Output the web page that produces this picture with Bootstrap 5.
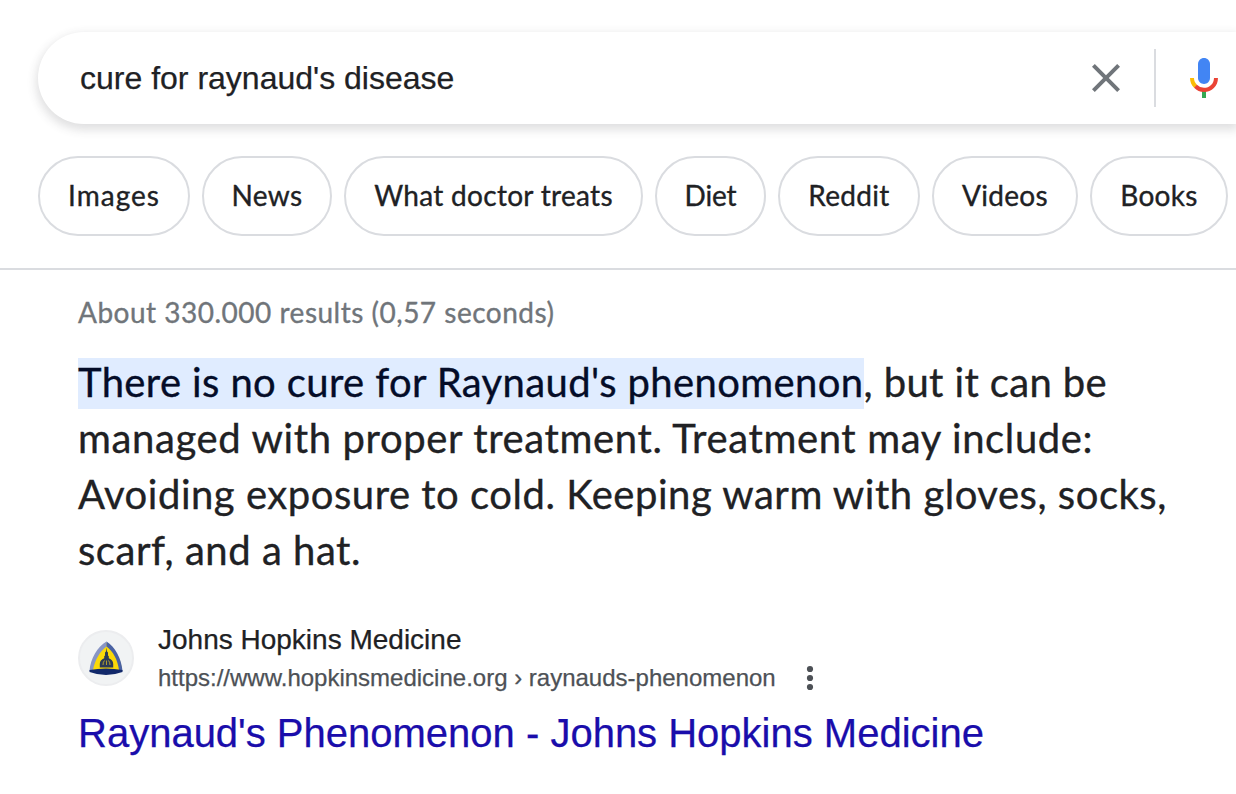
<!DOCTYPE html>
<html lang="en">
<head>
    <meta charset="UTF-8">
    <meta name="viewport" content="width=device-width, initial-scale=1.0">
    <title>cure for raynaud's disease - Search</title>
    <link href="https://cdn.jsdelivr.net/npm/bootstrap@5.3.0/dist/css/bootstrap.min.css" rel="stylesheet">
    <style>
        :root {
            --text-color: #202124;
            --muted-color: #70757a;
            --line-color: #dadce0;
            --link-color: #1a0dab;
        }

        body {
            background-color: #fff;
            color: var(--text-color);
            font-family: "Liberation Sans", Arial, sans-serif;
            height: 794px;
            -webkit-text-stroke: 0.25px;
        }

        .ui-font {
            font-family: Lato, "Open Sans", sans-serif;
            -webkit-text-stroke: 0.35px;
        }

        .search-wrap {
            padding: 32px 0 32px 38px;
        }

        .search-box {
            height: 92px;
            padding-left: 42px;
            box-shadow: 0 4px 10px 2px rgba(64, 60, 67, 0.16);
        }

        .search-text {
            width: 1002px;
            font-size: 32px;
            line-height: 40px;
        }

        .search-divider {
            width: 2px;
            height: 58px;
            margin: 0 24px;
            background-color: var(--line-color);
        }

        .filters {
            gap: 12px;
            padding: 0 0 32px 38px;
            border-bottom: 2px solid var(--line-color);
        }

        .filter-pill {
            height: 80px;
            padding: 0 0 3px;
            border: 2px solid var(--line-color);
            color: var(--text-color);
            font-size: 28px;
            letter-spacing: 0.3px;
            white-space: nowrap;
        }

        .w-images { width: 152px; letter-spacing: 1px; }
        .w-news { width: 130px; }
        .w-doctor { width: 299px; }
        .w-diet { width: 111px; letter-spacing: -0.1px; }
        .w-reddit { width: 142px; }
        .w-videos { width: 146px; }
        .w-books { width: 138px; }

        .results {
            padding: 28px 0 0 78px;
        }

        .stats {
            margin-bottom: 28px;
            color: var(--muted-color);
            font-size: 28px;
            line-height: 28px;
            letter-spacing: 0.5px;
        }

        .answer {
            margin-bottom: 42px;
            font-size: 40px;
            line-height: 56px;
            letter-spacing: 0.53px;
            white-space: nowrap;
        }

        .answer-first {
            letter-spacing: 0.38px;
        }

        .answer-second {
            letter-spacing: 0.63px;
        }

        .highlighted {
            padding-bottom: 3px;
            background-color: #e0ecff;
            color: #040c28;
        }

        .site-icon {
            width: 56px;
            height: 56px;
            margin: 10px 24px 0 0;
            background-color: #f1f3f4;
            border: 2px solid #ecedef;
        }

        .site-name {
            padding-top: 2px;
            font-size: 28px;
            line-height: 36px;
        }

        .site-url {
            color: #4d5156;
            font-size: 24px;
            line-height: 40px;
        }

        .more-icon {
            margin-left: 28px;
        }

        .result-title {
            margin-top: 9px;
            font-size: 40px;
            line-height: 52px;
            font-weight: 400;
        }

        .result-title a {
            color: var(--link-color);
        }
    </style>
</head>
<body class="overflow-hidden">
    <header>
        <div class="search-wrap">
            <div class="search-box d-flex align-items-center rounded-start-pill bg-white">
                <div class="search-text flex-shrink-0">cure for raynaud's disease</div>
                <svg class="flex-shrink-0" width="48" height="48" viewBox="0 0 24 24" fill="#70757a">
                    <path d="M19 6.41L17.59 5 12 10.59 6.41 5 5 6.41 10.59 12 5 17.59 6.41 19 12 13.41 17.59 19 19 17.59 13.41 12z"/>
                </svg>
                <div class="search-divider flex-shrink-0"></div>
                <svg class="flex-shrink-0" width="48" height="48" viewBox="0 0 24 24">
                    <path fill="#4285f4" d="m12 15c1.66 0 3-1.31 3-2.97v-7.02c0-1.66-1.34-3.01-3-3.01s-3 1.34-3 3.01v7.02c0 1.66 1.34 2.97 3 2.97z"/>
                    <path fill="#34a853" d="m11 18.08h2v3.92h-2z"/>
                    <path fill="#fbbc04" d="m7.05 16.87c-1.27-1.33-2.05-2.83-2.05-4.87h2c0 1.45 0.56 2.42 1.47 3.38v0.32l-1.15 1.18z"/>
                    <path fill="#ea4335" d="m12 16.93a4.97 5.25 0 0 1-3.54-1.55l-1.41 1.49c1.26 1.34 3.02 2.13 4.95 2.13 3.87 0 6.99-2.92 6.99-7h-1.99c0 2.92-2.24 4.93-5 4.93z"/>
                </svg>
            </div>
        </div>

        <nav class="filters ui-font d-flex">
            <a href="#" class="filter-pill w-images btn rounded-pill d-flex align-items-center justify-content-center">Images</a>
            <a href="#" class="filter-pill w-news btn rounded-pill d-flex align-items-center justify-content-center">News</a>
            <a href="#" class="filter-pill w-doctor btn rounded-pill d-flex align-items-center justify-content-center">What doctor treats</a>
            <a href="#" class="filter-pill w-diet btn rounded-pill d-flex align-items-center justify-content-center">Diet</a>
            <a href="#" class="filter-pill w-reddit btn rounded-pill d-flex align-items-center justify-content-center">Reddit</a>
            <a href="#" class="filter-pill w-videos btn rounded-pill d-flex align-items-center justify-content-center">Videos</a>
            <a href="#" class="filter-pill w-books btn rounded-pill d-flex align-items-center justify-content-center">Books</a>
        </nav>
    </header>

    <main class="results">
        <div class="stats ui-font">About 330.000 results (0,57 seconds)</div>

        <div class="answer ui-font">
            <span class="answer-first"><span class="highlighted">There is no cure for Raynaud's phenomenon</span>, but it can be</span><br>
            <span class="answer-second">managed with proper treatment. Treatment may include:</span><br>
            Avoiding exposure to cold. Keeping warm with gloves, socks,<br>
            scarf, and a hat.
        </div>

        <div class="d-flex align-items-start">
            <div class="site-icon rounded-circle d-flex align-items-center justify-content-center">
                <!-- Shield with dome -->
                <svg width="36" height="36" viewBox="0 0 36 36">
                    <path fill="#fbd908" d="M18.500 3C12 8 3.500 18 2 31q16 5 32 0C33 18 26 8 18.500 3z"/>
                    <path fill="#8895c4" d="M18.500 1.500C9.500 7 2.500 18 1.500 31l3.500-1C7 20 12 11 18.500 6.500z"/>
                    <path fill="#4a62a3" d="M18.500 1.500C27 7 33.500 18 34.500 31l-3.500-1C29.700 20 25 11 18.500 6.500z"/>
                    <path fill="#12296b" d="M1.500 30q16.500-3 33 0v2q-16.500 6-33 0z"/>
                    <path fill="#2c3a55" d="M18.500 7.500l.5 4 1 1v3l.8.800v2c2.800 1 4.400 3 4.400 5.700v3.500H11.800V24c0-2.700 1.600-4.700 4.400-5.700v-2l.8-.8v-3l1-1z"/>
                    <path fill="none" stroke="#e9c91f" stroke-width=".7" d="M15 25q0-3 1.500-4.500M18.500 25V20.500M22 25q0-3-1.500-4.500"/>
                </svg>
            </div>
            <div>
                <div class="site-name">Johns Hopkins Medicine</div>
                <div class="site-url d-flex align-items-center">
                    <span>https://www.hopkinsmedicine.org › raynauds-phenomenon</span>
                    <svg class="more-icon" width="12" height="28" viewBox="0 0 12 28" fill="#4d5156">
                        <circle cx="6" cy="5" r="3.100"/>
                        <circle cx="6" cy="14" r="3.100"/>
                        <circle cx="6" cy="23" r="3.100"/>
                    </svg>
                </div>
            </div>
        </div>

        <h3 class="result-title mb-0"><a href="#" class="text-decoration-none">Raynaud's Phenomenon - Johns Hopkins Medicine</a></h3>
    </main>

    <script src="https://cdn.jsdelivr.net/npm/bootstrap@5.3.0/dist/js/bootstrap.bundle.min.js"></script>
</body>
</html>
